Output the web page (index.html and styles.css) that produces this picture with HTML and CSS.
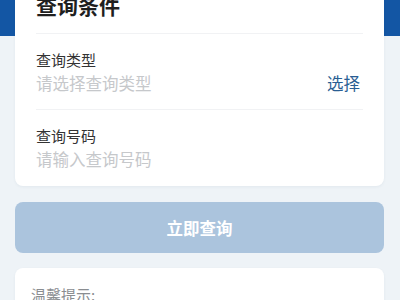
FILE: index.html
```html
<!DOCTYPE html>
<html lang="zh">
<head>
<meta charset="utf-8">
<link rel="stylesheet" href="styles.css">
</head>
<body>
<div class="page">
  <div class="card form">
    <div class="title">查询条件</div>
    <div class="field">
      <div class="label">查询类型</div>
      <div class="row">
        <span class="placeholder">请选择查询类型</span>
        <span class="pick">选择</span>
      </div>
    </div>
    <div class="field last">
      <div class="label">查询号码</div>
      <div class="row">
        <span class="placeholder">请输入查询号码</span>
      </div>
    </div>
  </div>
  <button class="submit">立即查询</button>
  <div class="card tips">
    <div class="tips-title">温馨提示:</div>
  </div>
</div>
</body>
</html>
```

FILE: styles.css
```css
html, body {
  margin: 0;
  padding: 0;
}
body {
  width: 400px;
  height: 300px;
  overflow: hidden;
  background: linear-gradient(#1356a4 0, #1356a4 36px, #eef3f7 36px, #eef3f7 100%);
  font-family: "Noto Sans CJK SC", "Noto Sans", sans-serif;
}
.page {
  padding: 0 16px 0 15px;
}
.card {
  background: #ffffff;
  border-radius: 8px;
  box-shadow: 0 1px 3px rgba(40, 70, 110, 0.06);
}
.form {
  margin-top: -10px;
  padding: 0 21px 0 21px;
}
.title {
  font-size: 21px;
  font-weight: 700;
  color: #1f1f1f;
  line-height: 31px;
  padding-bottom: 12px;
  border-bottom: 1px solid #f1f2f4;
}
.field {
  padding: 15px 0 14px;
  border-bottom: 1px solid #f1f2f4;
}
.field.last {
  border-bottom: none;
  padding-bottom: 15px;
}
.label {
  font-size: 15px;
  line-height: 22px;
  color: #333333;
}
.row {
  display: flex;
  justify-content: space-between;
  align-items: center;
  height: 24px;
}
.placeholder {
  font-size: 16.5px;
  line-height: 24px;
  color: #c6c8cb;
}
.pick {
  font-size: 16.5px;
  line-height: 24px;
  color: #2a5e93;
  margin-right: 3px;
}
.submit {
  display: block;
  width: 100%;
  height: 51px;
  margin-top: 16px;
  border: none;
  border-radius: 8px;
  background: #abc4dd;
  color: #ffffff;
  font-family: "Noto Sans CJK SC", "Noto Sans", sans-serif;
  font-size: 16.5px;
  font-weight: 700;
  padding: 0;
}
.tips {
  margin-top: 15px;
  padding: 16px 16px 20px;
  height: 60px;
}
.tips-title {
  font-size: 15px;
  line-height: 22px;
  color: #8a8d91;
}
```
